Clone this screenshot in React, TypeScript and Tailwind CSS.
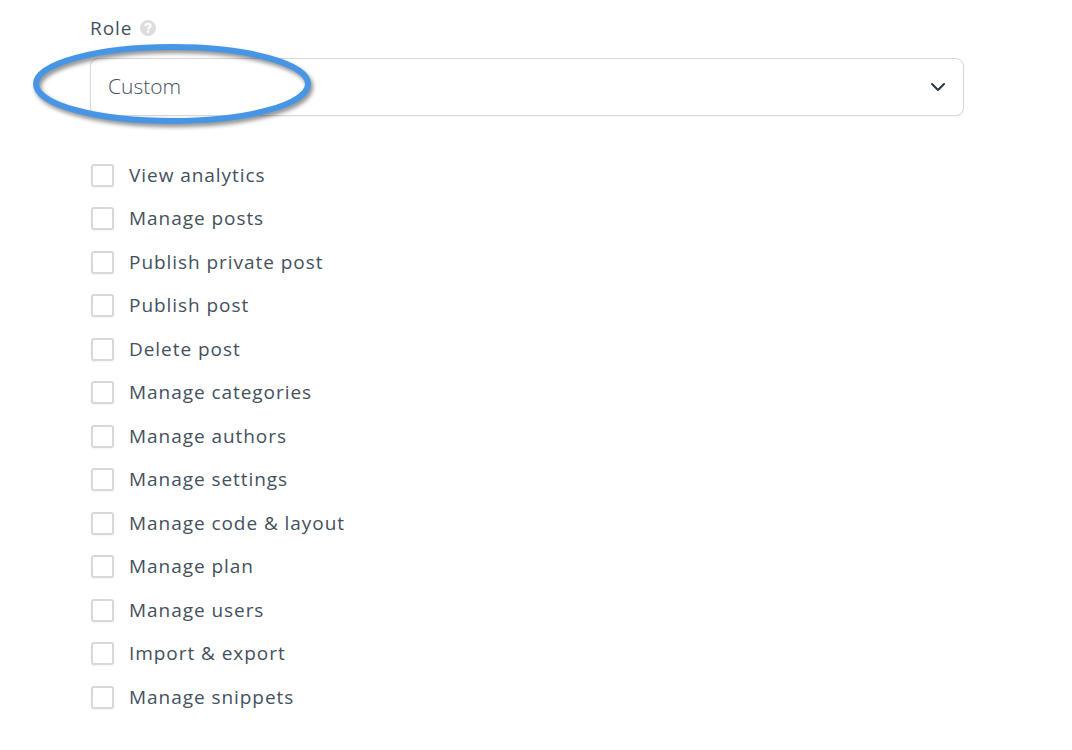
import React, { useState } from 'react';
import { ChevronDown } from 'lucide-react';

const permissions = [
    'View analytics',
    'Manage posts',
    'Publish private post',
    'Publish post',
    'Delete post',
    'Manage categories',
    'Manage authors',
    'Manage settings',
    'Manage code & layout',
    'Manage plan',
    'Manage users',
    'Import & export',
    'Manage snippets',
];

function HelpIcon() {
    return (
        <svg viewBox="0 0 16 16" className="w-4 h-4" aria-hidden="true">
            <circle cx="8" cy="8" r="8" fill="#dddddf" />
            <path d="M5.4 6.2C5.5 4.7 6.5 3.9 8 3.9s2.6.8 2.6 2.2C10.6 7.6 8.1 7.7 8.1 9.4" fill="none" stroke="#fff" strokeWidth="2.3" />
            <rect x="6.9" y="10.5" width="2.4" height="2.2" fill="#fff" />
        </svg>
    );
}

function Highlight() {
    return (
        <svg
            viewBox="0 0 288 90"
            className="absolute -left-[60px] -top-[17px] w-[288px] h-[90px] pointer-events-none overflow-visible drop-shadow-[2px_3px_2px_rgba(0,0,0,0.45)]"
            aria-hidden="true"
        >
            <ellipse cx="142" cy="43" rx="136" ry="37" fill="none" stroke="#4696e5" strokeWidth="6" />
        </svg>
    );
}

export default function App() {
    const [role, setRole] = useState('Custom');
    const [selected, setSelected] = useState<string[]>([]);

    const toggle = (name: string) => {
        setSelected(prev => (prev.includes(name) ? prev.filter(p => p !== name) : [...prev, name]));
    };

    return (
        <form className="min-h-screen flex flex-col bg-white pt-3.5 pb-[39px] pl-[90px] pr-[108px] font-['Open_Sans',sans-serif] text-[19px] text-[#44515d]">
            <div className="flex items-center gap-2 h-7">
                <label htmlFor="role" className="tracking-wider">Role</label>
                <button type="button" aria-label="About roles">
                    <HelpIcon />
                </button>
            </div>

            <div className="relative mt-4">
                <select
                    id="role"
                    value={role}
                    onChange={e => setRole(e.target.value)}
                    className="block w-full h-[58px] appearance-none rounded-lg border border-[#d8d8d8] bg-white pl-[17px] pr-12 text-[21px] font-light shadow-xs outline-none"
                >
                    <option>Custom</option>
                </select>
                <ChevronDown className="absolute right-3.5 top-[17px] text-[#2a3642] pointer-events-none" size={24} strokeWidth={2} />
                <Highlight />
            </div>

            <div className="mt-[45px] flex-1 flex flex-col justify-between">
                {permissions.map(name => (
                    <label key={name} className="flex items-center gap-[15px] h-7 tracking-wider">
                        <input
                            type="checkbox"
                            checked={selected.includes(name)}
                            onChange={() => toggle(name)}
                            className="ml-px w-[23px] h-[23px] shrink-0 appearance-none rounded-[3px] border-2 border-[#d8d8d8] bg-white shadow-xs checked:bg-[#4696e5]"
                        />
                        {name}
                    </label>
                ))}
            </div>
        </form>
    );
}
